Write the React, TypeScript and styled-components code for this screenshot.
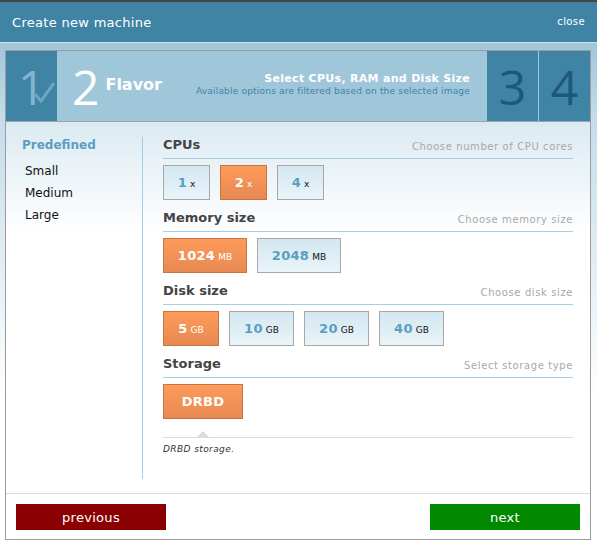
import React from 'react'
import styled, { createGlobalStyle } from 'styled-components'

const GlobalStyle = createGlobalStyle`
  html, body {
    margin: 0;
    padding: 0;
  }
  body {
    font-family: "DejaVu Sans", Verdana, sans-serif;
  }
`

type Option = { value: string; unit: string; selected?: boolean; width: number }

const cpus: Option[] = [
  { value: '1', unit: 'x', width: 47 },
  { value: '2', unit: 'x', selected: true, width: 47 },
  { value: '4', unit: 'x', width: 47 },
]
const memory: Option[] = [
  { value: '1024', unit: 'MB', selected: true, width: 84 },
  { value: '2048', unit: 'MB', width: 84 },
]
const disks: Option[] = [
  { value: '5', unit: 'GB', selected: true, width: 56 },
  { value: '10', unit: 'GB', width: 65 },
  { value: '20', unit: 'GB', width: 65 },
  { value: '40', unit: 'GB', width: 65 },
]

const Section = ({ title, hint, children }: { title: string; hint: string; children: React.ReactNode }) => (
  <SectionBox>
    <SectionHead>
      <h3>{title}</h3>
      <span>{hint}</span>
    </SectionHead>
    <Choices>{children}</Choices>
  </SectionBox>
)

const Choice = ({ o }: { o: Option }) => (
  <ChoiceBtn $selected={!!o.selected} $w={o.width}>
    <b>{o.value}</b>
    {o.unit && <small>{o.unit}</small>}
  </ChoiceBtn>
)

const App = () => {
  return (
    <Dialog>
      <GlobalStyle />
      <Header>
        <Title>Create new machine</Title>
        <Close>close</Close>
      </Header>
      <Body>
        <Panel>
          <Steps>
            <StepCell>
              <BigNum $tone="done">1</BigNum>
              <Check width="26" height="26" viewBox="0 0 26 26">
                <polyline points="3,13 9,20 22,2" fill="none" stroke="#6ba6c6" strokeWidth="3" />
              </Check>
            </StepCell>
            <Current>
              <BigNum $tone="current">2</BigNum>
              <StepName>Flavor</StepName>
              <StepInfo>
                <strong>Select CPUs, RAM and Disk Size</strong>
                <span>Available options are filtered based on the selected image</span>
              </StepInfo>
            </Current>
            <StepCell>
              <BigNum $tone="next">3</BigNum>
            </StepCell>
            <StepSep />
            <StepCell>
              <BigNum $tone="next">4</BigNum>
            </StepCell>
          </Steps>
          <Content>
            <Sidebar>
              <SideTitle>Predefined</SideTitle>
              <SideItem>Small</SideItem>
              <SideItem>Medium</SideItem>
              <SideItem>Large</SideItem>
            </Sidebar>
            <Main>
              <Section title="CPUs" hint="Choose number of CPU cores">
                {cpus.map(o => <Choice key={o.value} o={o} />)}
              </Section>
              <Section title="Memory size" hint="Choose memory size">
                {memory.map(o => <Choice key={o.value} o={o} />)}
              </Section>
              <Section title="Disk size" hint="Choose disk size">
                {disks.map(o => <Choice key={o.value} o={o} />)}
              </Section>
              <Section title="Storage" hint="Select storage type">
                <ChoiceBtn $selected $w={80}>
                  <b>DRBD</b>
                </ChoiceBtn>
              </Section>
              <Description>
                <Pointer />
                <p>DRBD storage.</p>
              </Description>
            </Main>
          </Content>
          <Footer>
            <NavBtn $kind="prev">previous</NavBtn>
            <NavBtn $kind="next">next</NavBtn>
          </Footer>
        </Panel>
      </Body>
    </Dialog>
  )
}

export default App

const Dialog = styled.div`
  width: 597px;
  height: 545px;
  display: flex;
  flex-direction: column;
  border-top: 2px solid #454545;
  box-sizing: border-box;
  background: linear-gradient(to bottom, #8bbad2 0px, #c5dde9 120px, #ffffff 400px);
`

const Header = styled.div`
  height: 40px;
  background: #3f83a5;
  border-bottom: 1px solid #cfe1ea;
  display: flex;
  align-items: center;
  justify-content: space-between;
  padding: 0 12px 0 12px;
`

const Title = styled.div`
  color: #fff;
  font-size: 13px;
  letter-spacing: 0.3px;
`

const Close = styled.div`
  color: #fff;
  font-size: 10px;
  letter-spacing: 0.4px;
  margin-top: -1px;
`

const Body = styled.div`
  padding: 7px 6px 5px 5px;
`

const Panel = styled.div`
  height: 490px;
  box-sizing: border-box;
  border: 1px solid #9c9c9c;
  background: #fff;
  display: flex;
  flex-direction: column;
`

const Steps = styled.div`
  height: 70px;
  display: flex;
  border-bottom: 1px solid #9aa4aa;
`

const StepCell = styled.div`
  width: 51px;
  position: relative;
  background: #3f83a5;
  display: flex;
  align-items: center;
  justify-content: center;
`

const StepSep = styled.div`
  width: 1px;
  background: #a3c7da;
`

const BigNum = styled.div<{ $tone: 'done' | 'current' | 'next' }>`
  font-family: "Open Sans", "DejaVu Sans", sans-serif;
  font-weight: 400;
  font-size: 48px;
  line-height: 1;
  margin-top: 2px;
  color: ${p => (p.$tone === 'done' ? '#80b4d0' : p.$tone === 'current' ? '#ffffff' : '#1d5879')};
`

const Check = styled.svg`
  position: absolute;
  left: 26px;
  top: 30px;
`

const Current = styled.div`
  flex: 1;
  background: #a0c6da;
  display: flex;
  align-items: center;
  padding: 0 17px 0 15px;
`

const StepName = styled.div`
  color: #fff;
  font-size: 16px;
  font-weight: bold;
  margin-left: 6px;
  margin-bottom: 4px;
`

const StepInfo = styled.div`
  margin-left: auto;
  display: flex;
  flex-direction: column;
  align-items: flex-end;
  margin-bottom: 4px;
  strong {
    color: #fff;
    font-size: 11px;
    letter-spacing: 0.3px;
  }
  span {
    color: #3e84a8;
    font-size: 9px;
    margin-top: 1px;
    letter-spacing: 0.2px;
  }
`

const Content = styled.div`
  flex: 1;
  display: flex;
  background: linear-gradient(to bottom, #dbeaf2 0px, #ffffff 110px);
`

const Sidebar = styled.div`
  width: 137px;
  margin: 15px 0 14px;
  border-right: 1px solid #a6cde1;
  padding: 1px 0 0 16px;
  box-sizing: border-box;
`

const SideTitle = styled.div`
  color: #5a9ec0;
  font-size: 12px;
  font-weight: bold;
  margin-bottom: 8px;
`

const SideItem = styled.div`
  color: #111;
  font-size: 12px;
  line-height: 22px;
  padding-left: 3px;
`

const Main = styled.div`
  flex: 1;
  padding: 15px 17px 0 20px;
`

const SectionBox = styled.div`
  & + & {
    margin-top: 10px;
  }
`

const SectionHead = styled.div`
  height: 21px;
  border-bottom: 1px solid #a6cde1;
  display: flex;
  justify-content: space-between;
  align-items: flex-start;
  h3 {
    margin: 0;
    font-size: 13px;
    font-weight: bold;
    color: #444;
    line-height: 16px;
  }
  span {
    font-size: 10px;
    color: #a8a8a8;
    letter-spacing: 0.6px;
    line-height: 16px;
    margin-top: 2px;
  }
`

const Choices = styled.div`
  display: flex;
  gap: 10px;
  margin-top: 6px;
`

const ChoiceBtn = styled.div<{ $selected: boolean; $w: number }>`
  width: ${p => p.$w}px;
  height: 35px;
  box-sizing: border-box;
  border: 1px solid ${p => (p.$selected ? '#c9733f' : '#a8a8a8')};
  background: ${p =>
    p.$selected
      ? 'linear-gradient(to bottom, #fd9b5b, #e78952)'
      : 'linear-gradient(to bottom, #d3e7f1, #e9f4f9)'};
  display: flex;
  align-items: center;
  justify-content: center;
  gap: 3px;
  b {
    font-size: 13px;
    font-weight: bold;
    color: ${p => (p.$selected ? '#fff' : '#5a9fc1')};
    letter-spacing: 0.3px;
  }
  small {
    font-size: 9px;
    color: ${p => (p.$selected ? '#fff' : '#111')};
    margin-top: 2px;
  }
`

const Description = styled.div`
  margin-top: 18px;
  border-top: 1px solid #dcdcdc;
  position: relative;
  p {
    margin: 6px 0 0;
    font-size: 9px;
    font-style: italic;
    color: #333;
    letter-spacing: 0.4px;
  }
`

const Pointer = styled.div`
  position: absolute;
  left: 34px;
  top: -7px;
  width: 0;
  height: 0;
  border-left: 6px solid transparent;
  border-right: 6px solid transparent;
  border-bottom: 6px solid #dcdcdc;
`

const Footer = styled.div`
  height: 46px;
  border-top: 1px solid #dcdcdc;
  display: flex;
  justify-content: space-between;
  align-items: flex-start;
  padding: 10px 10px 0 10px;
  box-sizing: border-box;
`

const NavBtn = styled.div<{ $kind: 'prev' | 'next' }>`
  width: 150px;
  height: 26px;
  background: ${p => (p.$kind === 'prev' ? '#8b0000' : '#008800')};
  color: #fff;
  font-size: 13px;
  display: flex;
  align-items: center;
  justify-content: center;
  letter-spacing: 0.3px;
`
